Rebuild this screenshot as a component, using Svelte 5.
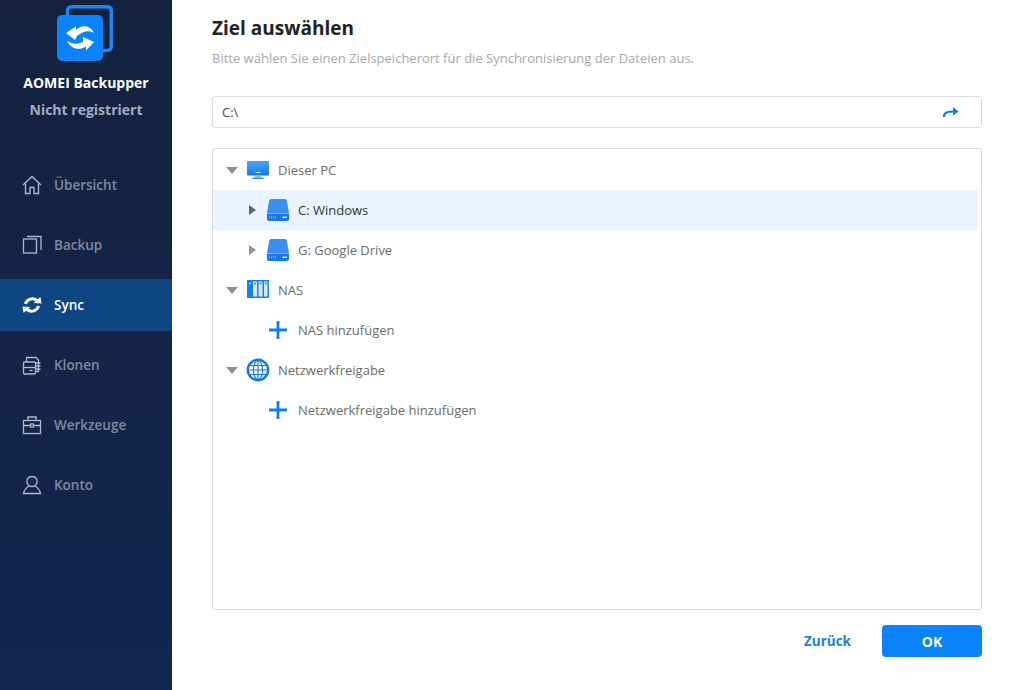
<script>
  const nav = [
    { id: "home", label: "Übersicht" },
    { id: "backup", label: "Backup" },
    { id: "sync", label: "Sync", active: true },
    { id: "clone", label: "Klonen" },
    { id: "tools", label: "Werkzeuge" },
    { id: "user", label: "Konto" },
  ];

  const tree = [
    { icon: "pc", label: "Dieser PC", level: 0, caret: "down" },
    { icon: "disk", label: "C: Windows", level: 1, caret: "right", selected: true },
    { icon: "disk", label: "G: Google Drive", level: 1, caret: "right" },
    { icon: "nas", label: "NAS", level: 0, caret: "down" },
    { icon: "plus", label: "NAS hinzufügen", level: 1 },
    { icon: "globe", label: "Netzwerkfreigabe", level: 0, caret: "down" },
    { icon: "plus", label: "Netzwerkfreigabe hinzufügen", level: 1 },
  ];
</script>

<div class="page">
  <aside class="sidebar">
    <div class="brand">
      <svg class="logo" width="56" height="56" viewBox="0 0 56 56">
        <path d="M10.5 10 V6 Q10.5 1.75 15 1.75 H50 Q54.3 1.75 54.3 6 V41 Q54.3 45.5 50 45.5 H46" fill="none" stroke="#1a87f5" stroke-width="3.5" />
        <rect x="0" y="10" width="46" height="46" rx="5" fill="#0b84fb" />
        <path d="M9 28 L19 21.5 V25 C25 19.5 33 20 37 28 C32 25 26 26 20 31 L18 35 Z" fill="#fff" />
        <path d="M37 37 L29 45.5 V41.5 C22 46 14 44 10 36 C15 39 21 40 26 36.5 L26 32 Z" fill="#fff" />
      </svg>
      <div class="name">AOMEI Backupper</div>
      <div class="status">Nicht registriert</div>
    </div>
    <nav>
      {#each nav as item}
        <div class="nav-item" class:active={item.active}>
          <svg class="nav-icon" width="20" height="20" viewBox="0 0 20 20" fill="none" stroke="currentColor" stroke-width="1.3">
            {#if item.id === "home"}
              <path d="M1 10 L10 1.5 L19 10" />
              <path d="M3.5 8.5 V18.5 H8 V12.5 H12 V18.5 H16.5 V8.5" />
            {:else if item.id === "backup"}
              <rect x="1.5" y="4" width="13" height="14" />
              <path d="M5 1.5 H19 V15" />
            {:else if item.id === "sync"}
              <path d="M3.5 9 A7 6.5 0 0 1 15 5.5" stroke-width="3" />
              <path d="M16.5 11 A7 6.5 0 0 1 5 14.5" stroke-width="3" />
              <path d="M11.5 8 L19.5 8.5 L18.5 2 Z" fill="currentColor" stroke="none" />
              <path d="M8.5 12 L0.5 11.5 L1.5 18 Z" fill="currentColor" stroke="none" />
            {:else if item.id === "clone"}
              <rect x="1.5" y="7" width="12" height="12" rx="1" />
              <path d="M1.5 12.5 H13.5" />
              <path d="M7.5 15.5 H10.5" />
              <path d="M4.5 7 V2.5 H14 L16.5 5 V16.5 H13.5 M14 8 H18.5 M14 11 H18.5 M14 14 H18.5" />
            {:else if item.id === "tools"}
              <rect x="1.5" y="5.5" width="17" height="13" />
              <path d="M6 5.5 V2 H14 V5.5" />
              <path d="M1.5 10.5 H8 M12 10.5 H18.5" />
              <rect x="8.5" y="9" width="3" height="3" />
            {:else}
              <path d="M10 1.5 C14.5 1.5 15.5 5 15 7.5 C14.5 10 12 11.5 10 11.5 C8 11.5 5.5 10 5 7.5 C4.5 5 5.5 1.5 10 1.5 Z" />
              <path d="M7 11 C4 13 2 15.5 1.5 18.5 H18.5 C18 15.5 16 13 13 11" />
            {/if}
          </svg>
          <span>{item.label}</span>
        </div>
      {/each}
    </nav>
  </aside>

  <main>
    <h1>Ziel auswählen</h1>
    <p class="hint">Bitte wählen Sie einen Zielspeicherort für die Synchronisierung der Dateien aus.</p>

    <div class="path-box">
      <span>C:\</span>
      <svg width="18" height="14" viewBox="0 0 18 14" fill="none">
        <path d="M2 12 C2 7.5 5 6.5 12 6.5" stroke="#0b7fe8" stroke-width="2.2" />
        <path d="M11 2 L16.5 6.5 L11 10.5 Z" fill="#0b7fe8" />
      </svg>
    </div>

    <div class="tree">
      {#each tree as row}
        <div class="row" class:selected={row.selected} class:child={row.level === 1}>
          <span class="caret">
            {#if row.caret === "down"}
              <i class="down"></i>
            {:else if row.caret === "right"}
              <i class="right"></i>
            {/if}
          </span>
          <svg class="row-icon" width="24" height="24" viewBox="0 0 24 24">
            <defs>
              <linearGradient id="screen" x1="0" y1="0" x2="0" y2="1">
                <stop offset="0" stop-color="#49a5f8" />
                <stop offset="1" stop-color="#1479ee" />
              </linearGradient>
            </defs>
            {#if row.icon === "pc"}
              <rect x="1" y="3" width="22" height="14.5" rx="1" fill="url(#screen)" />
              <rect x="9" y="17.5" width="6" height="2" fill="#7dbcfa" />
              <rect x="6.5" y="19.5" width="11" height="1.5" fill="#2d8df6" />
              <rect x="9.5" y="14" width="5" height="1" fill="#d8eafd" />
            {:else if row.icon === "disk"}
              <path d="M5 1 H19 Q20.5 1 20.8 2.5 L23 15 H1 L3.2 2.5 Q3.5 1 5 1 Z" fill="#3b8ff3" />
              <path d="M1 15.5 H23 V21 Q23 23 21 23 H3 Q1 23 1 21 Z" fill="#1a76e6" />
              <rect x="16.5" y="18.5" width="4.5" height="1.5" fill="#cfe4fc" />
              <path d="M3.5 18 V20.5 M5.5 18 V20.5 M7.5 18 V20.5 M9.5 18 V20.5" stroke="#6aaaf5" stroke-width="0.8" />
            {:else if row.icon === "nas"}
              <rect x="1" y="2" width="22" height="18" fill="#1180f0" />
              <rect x="7" y="3.5" width="4" height="15" fill="#d6e9fc" />
              <rect x="12.5" y="3.5" width="4" height="15" fill="#d6e9fc" />
              <rect x="18" y="3.5" width="3.5" height="15" fill="#d6e9fc" />
              <path d="M8 5.5 H10 M13.5 5.5 H15.5 M18.8 5.5 H20.8" stroke="#1180f0" stroke-width="1.4" />
              <circle cx="4" cy="5.5" r="1" fill="#cfe4fc" />
            {:else if row.icon === "globe"}
              <circle cx="12" cy="12" r="10.2" fill="#fff" stroke="#1479e6" stroke-width="2.4" />
              <ellipse cx="12" cy="12" rx="4.6" ry="9.5" fill="none" stroke="#1479e6" stroke-width="1.1" />
              <path d="M12 2 V22 M2.5 12 H21.5 M4 7.5 H20 M4 16.5 H20" stroke="#1479e6" stroke-width="1.1" />
            {:else}
              <path d="M12 3 V21 M3 12 H21" stroke="#0f7ee8" stroke-width="2.8" />
            {/if}
          </svg>
          <span class="label">{row.label}</span>
        </div>
      {/each}
    </div>

    <div class="actions">
      <button class="back">Zurück</button>
      <button class="ok">OK</button>
    </div>
  </main>
</div>

<style>
  :global(body) {
    margin: 0;
    background: #fff;
  }

  .page {
    display: flex;
    width: 1013px;
    height: 690px;
    overflow: hidden;
    font-family: "Open Sans", "Noto Sans", sans-serif;
  }

  .sidebar {
    width: 172px;
    flex: none;
    background: linear-gradient(180deg, #14223f 0%, #12264f 100%);
  }

  .brand {
    display: flex;
    flex-direction: column;
    align-items: center;
    height: 155px;
  }

  .logo {
    margin-top: 5px;
    margin-right: 2px;
    flex: none;
  }

  .name {
    margin-top: 13px;
    font-size: 14px;
    line-height: 18px;
    font-weight: 700;
    color: #fff;
  }

  .status {
    margin-top: 9px;
    font-size: 14px;
    line-height: 18px;
    font-weight: 700;
    color: #a3acbd;
  }

  nav {
    display: flex;
    flex-direction: column;
    gap: 8px;
    margin-top: 4px;
  }

  .nav-item {
    display: flex;
    align-items: center;
    gap: 12px;
    height: 52px;
    padding-left: 22px;
    font-size: 13.5px;
    font-weight: 600;
    color: #808a9c;
  }

  .nav-item .nav-icon {
    color: #aeb9cc;
    flex: none;
  }

  .nav-item.active {
    background: #0e4583;
    color: #fff;
  }

  .nav-item.active .nav-icon {
    color: #fff;
  }

  main {
    flex: none;
    width: 770px;
    margin-left: 40px;
    display: flex;
    flex-direction: column;
  }

  h1 {
    margin: 16px 0 0;
    font-size: 19px;
    line-height: 24px;
    font-weight: 700;
    color: #222;
  }

  .hint {
    margin: 9px 0 0;
    font-size: 13px;
    line-height: 18px;
    color: #a8a8a8;
  }

  .path-box {
    display: flex;
    align-items: center;
    justify-content: space-between;
    box-sizing: border-box;
    height: 32px;
    margin-top: 29px;
    padding: 0 21px 0 9px;
    border: 1px solid #dcdcdc;
    border-radius: 3px;
    font-size: 13px;
    color: #444;
  }

  .tree {
    box-sizing: border-box;
    height: 462px;
    margin-top: 20px;
    padding: 1px 3px 0 0;
    border: 1px solid #dcdcdc;
    border-radius: 3px;
  }

  .row {
    display: flex;
    align-items: center;
    height: 40px;
    font-size: 13px;
    color: #6b6b6b;
  }

  .row.selected {
    background: #e9f4fe;
    color: #333;
  }

  .caret {
    flex: none;
    width: 13px;
    margin-left: 12px;
    display: flex;
    align-items: center;
    justify-content: center;
  }

  .row.child .caret {
    margin-left: 33px;
  }

  .caret i {
    display: block;
    width: 0;
    height: 0;
  }

  .caret .down {
    border-left: 6px solid transparent;
    border-right: 6px solid transparent;
    border-top: 7px solid #8a939c;
  }

  .caret .right {
    border-top: 5.5px solid transparent;
    border-bottom: 5.5px solid transparent;
    border-left: 7px solid #8a939c;
  }

  .row.selected .caret .right {
    border-left-color: #5c6670;
  }

  .row-icon {
    flex: none;
    margin-left: 8px;
  }

  .row.child .row-icon {
    margin-left: 7px;
  }

  .label {
    margin-left: 8px;
  }

  .actions {
    display: flex;
    justify-content: flex-end;
    align-items: center;
    gap: 31px;
    margin-top: 15px;
  }

  button {
    border: none;
    font-family: inherit;
    font-weight: 700;
    cursor: pointer;
  }

  .back {
    background: none;
    color: #1a7fe0;
    padding: 0;
    font-size: 13.5px;
  }

  .ok {
    width: 100px;
    height: 32px;
    border-radius: 4px;
    background: #0a84fb;
    color: #fff;
    font-size: 14px;
  }
</style>
